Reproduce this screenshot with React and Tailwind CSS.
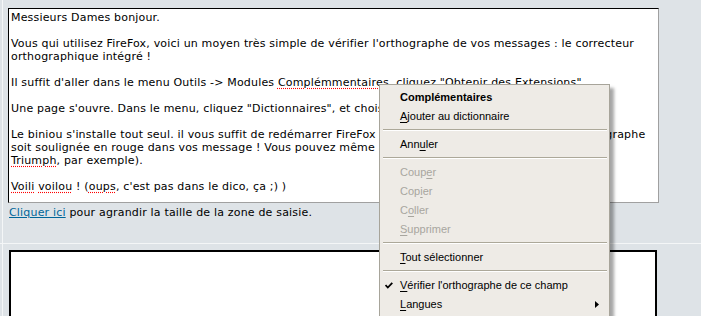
const Faute = ({ children }) => (
  <span className="underline decoration-dotted decoration-[#ff0000] underline-offset-[2px]">
    {children}
  </span>
);

// Texte du message, une ligne par entrée (comme dans la zone de saisie)
const lignes = [
  "Messieurs Dames bonjour.",
  "",
  "Vous qui utilisez FireFox, voici un moyen très simple de vérifier l'orthographe de vos messages : le correcteur",
  "orthographique intégré !",
  "",
  <>
    Il suffit d'aller dans le menu Outils -&gt; Modules <Faute>Complémmentaires</Faute>, cliquez "Obtenir des
    Extensions".
  </>,
  "",
  "Une page s'ouvre. Dans le menu, cliquez \"Dictionnaires\", et choisissez le français.",
  "",
  "Le biniou s'installe tout seul. il vous suffit de redémarrer FireFox 2, pour que la plus petite erreur d'orthographe",
  "soit soulignée en rouge dans vos message ! Vous pouvez même ajouter vos propres mots (",
  <>
    <Faute>Triumph</Faute>, par exemple).
  </>,
  "",
  <>
    <Faute>Voili</Faute> <Faute>voilou</Faute> ! (<Faute>oups</Faute>, c'est pas dans le dico, ça ;) )
  </>,
];

const menu = [
  { text: "Complémentaires", u: -1, bold: true },
  { text: "Ajouter au dictionnaire", u: 0 },
  { sep: true },
  { text: "Annuler", u: 3 },
  { sep: true },
  { text: "Couper", u: 4, disabled: true },
  { text: "Copier", u: 3, disabled: true },
  { text: "Coller", u: 1, disabled: true },
  { text: "Supprimer", u: 0, disabled: true },
  { sep: true },
  { text: "Tout sélectionner", u: 0 },
  { sep: true },
  { text: "Vérifier l'orthographe de ce champ", u: 0, checked: true },
  { text: "Langues", u: 0, submenu: true },
];

const MenuItem = ({ item }) => {
  if (item.sep) {
    return (
      <div className="pt-[3px] pb-[4px] pl-[3px] pr-[2px]">
        <div className="h-px bg-[#aca899]" />
        <div className="h-px bg-white" />
      </div>
    );
  }

  const { text, u } = item;
  return (
    <div
      className={`relative flex items-center h-[19px] pl-[20px] ${
        item.disabled ? "text-[#a8a69f]" : "text-black"
      } ${item.bold ? "font-bold" : ""}`}
    >
      {item.checked && (
        <svg className="absolute left-[5px] top-[6px]" width="8" height="7" viewBox="0 0 8 7">
          <path d="M0.5 3 L2.8 5.5 L7.3 0.8" fill="none" stroke="black" strokeWidth="1.8" />
        </svg>
      )}
      <span>
        {u < 0 ? (
          text
        ) : (
          <>
            {text.slice(0, u)}
            <span className="underline underline-offset-[2px]">{text[u]}</span>
            {text.slice(u + 1)}
          </>
        )}
      </span>
      {item.submenu && (
        <svg className="absolute right-[10px] top-[6px]" width="4" height="7" viewBox="0 0 4 7">
          <polygon points="0,0 4,3.5 0,7" fill="black" />
        </svg>
      )}
    </div>
  );
};

export default function App() {
  return (
    <div className="relative w-[701px] h-[316px] overflow-hidden bg-[#dee3e7] font-['DejaVu_Sans',sans-serif] text-[11px] tracking-[0.18px] text-black">
      {/* Première ligne du tableau : zone de saisie */}
      <div className="flex h-[243px]">
        <div className="w-[2px]" />
        <div className="w-px bg-[#f4f6f7]" />
        <div className="flex-1 pt-[8px]">
          <div className="ml-[5px] w-[651px] h-[195px] overflow-hidden bg-white border border-t-black border-l-black border-r-[#a0a0a0] border-b-[#a0a0a0] pt-[2px] pl-[2px]">
            {lignes.map((l, i) => (
              <div key={i} className="h-[13px] leading-[13px] whitespace-nowrap">
                {l}
              </div>
            ))}
          </div>
          <div className="ml-[6px] mt-[3px] leading-[13px] whitespace-nowrap">
            <a href="#" className="text-[#006699] underline">
              Cliquer ici
            </a>{" "}
            pour agrandir la taille de la zone de saisie.
          </div>
        </div>
      </div>

      <div className="h-px bg-[#f4f6f7]" />

      {/* Deuxième ligne */}
      <div className="flex h-[80px]">
        <div className="w-[2px]" />
        <div className="w-px bg-[#f4f6f7]" />
        <div className="flex-1 pt-[6px]">
          <div className="ml-[6px] w-[648px] h-[100px] bg-white border-2 border-black" />
        </div>
      </div>

      {/* Menu contextuel */}
      <div className="absolute left-[379px] top-[84px] w-[231px] bg-[#eeebe6] border border-[#a7a49a] pt-[3px] pb-[3px] font-['Liberation_Sans',sans-serif] text-[11px] tracking-normal shadow-[4px_4px_3px_rgba(0,0,0,0.35)]">
        {menu.map((item, i) => (
          <MenuItem key={i} item={item} />
        ))}
      </div>
    </div>
  );
}
